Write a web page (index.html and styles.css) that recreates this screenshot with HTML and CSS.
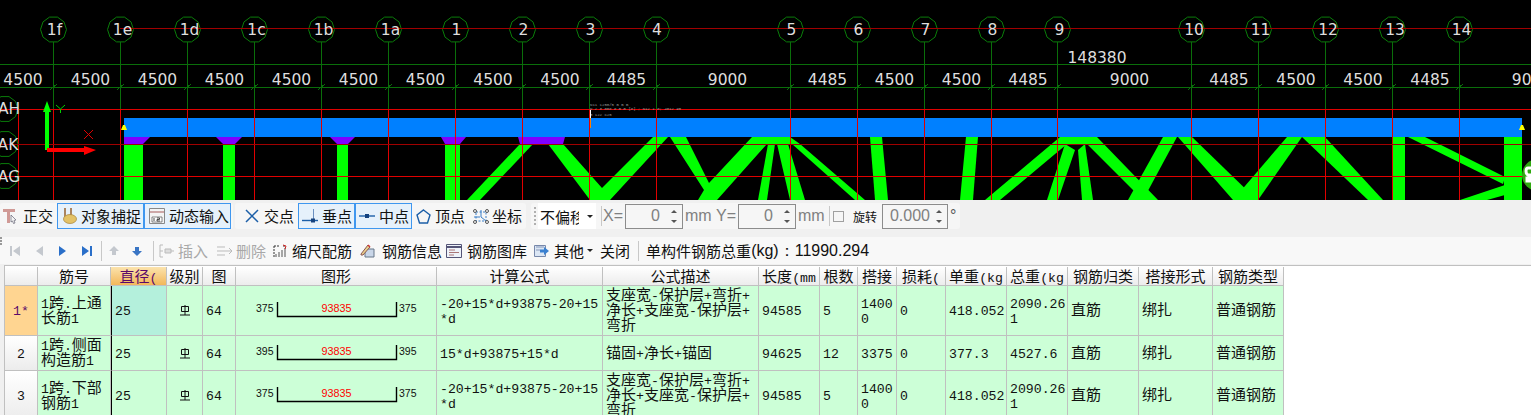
FILE: index.html
```html
<!DOCTYPE html>
<html lang="zh">
<head>
<meta charset="utf-8">
<title>钢筋编辑</title>
<link rel="stylesheet" href="styles.css">
</head>
<body>
<div class="app">
<svg class="cad" width="1531" height="200" viewBox="0 0 1531 200" xmlns="http://www.w3.org/2000/svg">
  <defs>
    <g id="axis">
      <polygon class="bubble" points="13,0 10.5,7.6 4,12.4 -4,12.4 -10.5,7.6 -13,0 -10.5,-7.6 -4,-12.4 4,-12.4 10.5,-7.6" transform="translate(.5 29.5)"/>
      <line class="gl" x1=".5" y1="42" x2=".5" y2="109"/>
      <line class="gl" x1="-3" y1="90" x2="4" y2="84"/>
      <line class="rv" x1=".5" y1="109" x2=".5" y2="200"/>
    </g>
  </defs>
  <rect width="1531" height="200" fill="#000"/>
  <line class="gl" x1="0" y1="64.5" x2="1531" y2="64.5"/>
  <line class="gl" x1="0" y1="87.5" x2="1531" y2="87.5"/>

  <g class="green">
    <rect x="124" y="144" width="19" height="56"/><rect x="223" y="144" width="12" height="56"/>
    <rect x="337" y="144" width="11" height="56"/><rect x="445" y="144" width="15" height="56"/>
    <polygon points="520,144 533,144 480,200 467,200"/>
    <polygon points="548,144 563,144 602,188 653,137 668,137 610,200 590,200"/>
    <polygon points="670,137 686,137 709,183 752,137 790,137 800,144 865,200 855,200 792,144 767,144 717,200 698,200 704,190"/>
    <polygon points="768,144 775,144 767,200 758,200"/>
    <polygon points="777,144 788,144 805,200 790,200"/>
    <polygon points="870,137 882,137 888,200 875,200"/>
    <polygon points="966,137 978,137 973,200 960,200"/>
    <polygon points="985,200 1060,137 1097,137 1158,200 1143,200 1087,144 1067,144 1000,200"/>
    <polygon points="1065,144 1075,150 1058,200 1047,200"/>
    <polygon points="1078,150 1085,144 1093,200 1082,200"/>
    <polygon points="1163,137 1177,137 1143,200 1128,200"/>
    <polygon points="1178,137 1192,137 1257,200 1233,200"/>
    <polygon points="1287,137 1302,137 1258,200 1233,200"/>
    <polygon points="1302,137 1325,137 1383,200 1368,200"/>
    <rect x="1392" y="137" width="13" height="63"/>
    <polygon points="1408,137 1425,137 1505,177 1503,184"/>
    <rect x="1504" y="137" width="18" height="63"/>
    <polygon points="1460,200 1505,185 1505,195 1487,200"/>
  </g>
  <g class="violet">
    <polygon points="124,137 150,137 143,144 124,144"/>
    <polygon points="216,137 242,137 235,144 223,144"/>
    <polygon points="330,137 355,137 348,144 337,144"/>
    <polygon points="441,137 466,137 460,144 445,144"/>
    <polygon points="518,137 565,137 563,144 520,144"/>
  </g>
  <rect x="124" y="118" width="1398" height="19" fill="#0080ff"/>

  <use href="#axis" x="53"/><use href="#axis" x="120"/><use href="#axis" x="187"/><use href="#axis" x="254"/>
  <use href="#axis" x="321"/><use href="#axis" x="388"/><use href="#axis" x="455"/><use href="#axis" x="522"/>
  <use href="#axis" x="589"/><use href="#axis" x="656"/><use href="#axis" x="790"/><use href="#axis" x="857"/>
  <use href="#axis" x="924"/><use href="#axis" x="991"/><use href="#axis" x="1057"/><use href="#axis" x="1191"/>
  <use href="#axis" x="1258"/><use href="#axis" x="1325"/><use href="#axis" x="1392"/><use href="#axis" x="1459"/>
  <line class="rv" x1="18.5" y1="109" x2="18.5" y2="200"/>

  <polygon class="bubble" points="18,109 15.5,116.6 9,121.4 1,121.4 -5,117 -5,101 1,96.6 9,96.6 15.5,101.4"/>
  <polygon class="bubble" points="18,144 15.5,151.6 9,156.4 1,156.4 -5,152 -5,136 1,131.6 9,131.6 15.5,136.4"/>
  <polygon class="bubble" points="18,176 15.5,183.6 9,188.4 1,188.4 -5,184 -5,168 1,163.6 9,163.6 15.5,168.4"/>

  <line class="rh" x1="120" y1="28.5" x2="1531" y2="28.5"/>
  <line class="rb" x1="0" y1="109.5" x2="1531" y2="109.5"/>
  <line class="rh" x1="0" y1="144.5" x2="1531" y2="144.5"/>
  <line class="rb" x1="0" y1="176.5" x2="1531" y2="176.5"/>

  <g class="lbl">
    <text x="54.5" y="35">1f</text><text x="122.5" y="35">1e</text><text x="189.5" y="35">1d</text><text x="256.5" y="35">1c</text>
    <text x="323.5" y="35">1b</text><text x="390.5" y="35">1a</text><text x="456.5" y="35">1</text><text x="523.5" y="35">2</text>
    <text x="590.5" y="35">3</text><text x="657" y="35">4</text><text x="791.5" y="35">5</text><text x="858.5" y="35">6</text>
    <text x="925.5" y="35">7</text><text x="992.5" y="35">8</text><text x="1059.5" y="35">9</text><text x="1194" y="35">10</text>
    <text x="1260.5" y="35">11</text><text x="1328" y="35">12</text><text x="1395" y="35">13</text><text x="1461.5" y="35">14</text>
    <text x="1097" y="63">148380</text>
    <text x="23" y="85">4500</text><text x="90.5" y="85">4500</text><text x="157.5" y="85">4500</text><text x="224.5" y="85">4500</text>
    <text x="291.5" y="85">4500</text><text x="358.5" y="85">4500</text><text x="425.5" y="85">4500</text><text x="493" y="85">4500</text>
    <text x="560" y="85">4500</text><text x="626.5" y="85">4485</text><text x="727.5" y="85">9000</text><text x="827.5" y="85">4485</text>
    <text x="894.5" y="85">4500</text><text x="961.5" y="85">4500</text><text x="1028" y="85">4485</text><text x="1129.5" y="85">9000</text>
    <text x="1229" y="85">4485</text><text x="1296" y="85">4500</text><text x="1363" y="85">4500</text><text x="1430" y="85">4485</text>
    <text x="1531.5" y="85">9000</text>
    <text x="9" y="114">AH</text><text x="8" y="150">AK</text><text x="9" y="182">AG</text>
  </g>

  <polygon points="45,150 45,112 43,112 47,101 51,112 49,112 49,150" fill="#00ff00"/>
  <polygon points="47,148 84,148 84,146 96,150 84,155 84,152 47,152" fill="#ff0000"/>
  <path d="M56 105l4.5 4 4.500-4M60.500 109v4" class="thin" stroke="#00d000"/>
  <path d="M84 130l9 9M93 130l-9 9" class="thin" stroke="#e00000"/>
  <polygon points="121,130 123,125 125,125 127,130" fill="#ffff00"/>
  <polygon points="1519,130 1521,125 1523,125 1525,130" fill="#ffff00"/>

  <g class="tiny">
    <text x="590" y="106">N11 1250/5 B B B</text>
    <text x="590" y="110">N 2 3 008 8 B B [8] ; N12 1 8; 4012 95</text>
    <text x="590" y="116">G 122 C25</text>
  </g>
  <rect x="590" y="110" width="1" height="8" fill="#fff"/>
  <rect x="590" y="118" width="1" height="10" fill="#ff8000"/>
  <circle cx="1538" cy="175" r="16" fill="#2fa80f"/>
  <path d="M1531 168h-3q-2 0-2 3t2 4h3v3h-4v3h4" fill="none" stroke="#fff" stroke-width="3"/>
</svg>

<div class="bar1">
  <div class="grp grp-a">
    <span class="tool t-ortho">
      <svg class="ic" width="15" height="16" viewBox="0 0 15 16"><path d="M0 1h12v3H7v11H4V4H0z" fill="#d09a96"/><path d="M8 7l5 5-2 .5 1 2.500-1.500.5-1-2.500L8 14z" fill="#f4f4f4" stroke="#667" stroke-width=".7"/></svg>正交</span>
    <span class="tool tog tog-87">
      <svg class="ic" width="15" height="18" viewBox="0 0 15 18"><path d="M3 1v9M9 1v9" stroke="#9b6a3a" stroke-width="1.600" fill="none"/><ellipse cx="8" cy="12" rx="6.500" ry="4.500" fill="#e3c267" stroke="#a58238" stroke-width=".7"/></svg>对象捕捉</span>
    <span class="tool tog tog-87">
      <svg class="ic" width="16" height="16" viewBox="0 0 16 16"><path d="M.5.500h15v15H.500z" fill="#f4f4f4" stroke="#888"/><path d="M1 4h14" stroke="#a65a5a"/><path d="M3 9h10v5H3z" fill="#fff" stroke="#555" stroke-width=".7"/><path d="M5 10v3M8 10h2.500v1.500H8V13h3" stroke="#222" stroke-width=".8" fill="none"/></svg>动态输入</span>
    <span class="grip grip-a"></span>
  </div>
  <div class="grp grp-b">
    <span class="tool">
      <svg class="ic" width="14" height="14" viewBox="0 0 14 14"><path d="M1 1l12 12M13 1L1 13" stroke="#1c5fa8" stroke-width="1.500"/></svg>交点</span>
    <span class="tool tog tog-57">
      <svg class="ic" width="16" height="14" viewBox="0 0 16 14"><path d="M0 11.500h16" stroke="#1c5fa8" stroke-width="1.400"/><path d="M11.500 0v10" stroke="#6a8fc0"/><rect x="9" y="9.500" width="4" height="4" fill="#15427e"/></svg>垂点</span>
    <span class="tool tog tog-57">
      <svg class="ic" width="16" height="14" viewBox="0 0 16 14"><path d="M0 7h16" stroke="#1c5fa8" stroke-width="1.400"/><rect x="6" y="5" width="4" height="4" fill="#15427e"/></svg>中点</span>
    <span class="tool t-vertex">
      <svg class="ic" width="15" height="15" viewBox="0 0 15 15"><path d="M7.500 1L14 6l-2.500 8h-8L1 6z" fill="none" stroke="#1c5fa8" stroke-width="1.400"/></svg>顶点</span>
    <span class="tool t-coord">
      <svg class="ic" width="18" height="17" viewBox="0 0 18 17"><path d="M4 4h10v9H4z" fill="none" stroke="#3a7fc8" stroke-dasharray="2 1.500"/><path d="M2 9h6M9 2v7l5 4" fill="none" stroke="#3a7fc8"/><circle cx="3" cy="3" r="1.500" fill="none" stroke="#555"/><circle cx="15" cy="3" r="1.500" fill="none" stroke="#555"/><circle cx="3" cy="14" r="1.500" fill="none" stroke="#555"/><circle cx="15" cy="14" r="1.500" fill="none" stroke="#555"/></svg>坐标</span>
  </div>
  <div class="grp grp-c">
    <span class="grip grip-c"></span>
    <span class="combo"><span class="combo-text">不偏移</span><span class="caret"></span></span>
    <span class="vsep vsep-a"></span>
    <span class="lat dim lab-x">X=</span>
    <span class="spin spin-58"><span class="spin-val lat">0</span><span class="arrows"><i class="up"></i><i class="dn"></i></span></span>
    <span class="lat dim lab-mm">mm</span>
    <span class="lat dim lab-y">Y=</span>
    <span class="spin spin-58"><span class="spin-val lat">0</span><span class="arrows"><i class="up"></i><i class="dn"></i></span></span>
    <span class="lat dim lab-mm">mm</span>
    <span class="vsep vsep-b"></span>
    <span class="check"></span>
    <span class="rot">旋转</span>
    <span class="spin spin-66"><span class="spin-val lat">0.000</span><span class="arrows"><i class="up"></i><i class="dn"></i></span></span>
    <span class="lat deg">°</span>
  </div>
</div>

<div class="bar2">
  <span class="grip2"></span>
  <span class="nav">
    <svg width="16" height="16" viewBox="0 0 16 16"><path d="M3 3h2v10H3zM13 3v10L6 8z" fill="#c4c8ce"/></svg>
    <svg width="16" height="16" viewBox="0 0 16 16"><path d="M12 3v10L5 8z" fill="#c4c8ce"/></svg>
    <svg width="16" height="16" viewBox="0 0 16 16"><path d="M4 3v10l7-5z" fill="#2a6fc9"/></svg>
    <svg width="16" height="16" viewBox="0 0 16 16"><path d="M3 3v10l7-5zM11 3h2v10h-2z" fill="#2a6fc9"/></svg>
  </span>
  <span class="vsep vsep-n1"></span>
  <span class="nav nav-s">
    <svg width="16" height="16" viewBox="0 0 16 16"><path d="M8 3l5 5h-3v4H6V8H3z" fill="#c4c8ce"/></svg>
    <svg width="16" height="16" viewBox="0 0 16 16"><path d="M8 13l5-5h-3V4H6v4H3z" fill="#3a75c4"/></svg>
  </span>
  <span class="vsep vsep-n2"></span>
  <span class="tool off s-ins"><svg width="15" height="14" viewBox="0 0 15 14"><path d="M4 1H1v12h3M1 7h3" fill="none" stroke="#bbb"/><path d="M6 5h6v4H6zM12 7h3" fill="#ddd" stroke="#bbb"/></svg>插入</span>
  <span class="tool off s-del"><svg width="15" height="14" viewBox="0 0 15 14"><path d="M0 3h8M0 7h8M0 11h8" stroke="#bbb"/><path d="M8 7h7M12 4l3 3-3 3" fill="none" stroke="#bbb"/></svg>删除</span>
  <span class="tool s-scale"><svg width="14" height="14" viewBox="0 0 14 14"><path d="M1 2h5M1 2v11M10 2h3" fill="none" stroke="#333" stroke-dasharray="2 1"/><path d="M3 13v-3M6 13V8M9 13V6M12 13V4" stroke="#555"/><path d="M10 1l3 1-1 3" fill="none" stroke="#c22"/></svg>缩尺配筋</span>
  <span class="tool s-info"><svg width="15" height="15" viewBox="0 0 15 15"><path d="M5 6h9v8H5z" fill="#c9d6e8" stroke="#678"/><path d="M1 11l7-9 2 2-7 8H1z" fill="#e8cf8a" stroke="#855"/><path d="M8 2l2 2" stroke="#c33" stroke-width="1.500"/></svg>钢筋信息</span>
  <span class="tool s-lib"><svg width="16" height="14" viewBox="0 0 16 14"><path d="M.5.500h15v13H.500z" fill="#eef3fa" stroke="#557"/><path d="M1 3h14" stroke="#557" stroke-width="2"/><path d="M3 6h6M3 8.500h10M3 11h5" stroke="#a77"/></svg>钢筋图库</span>
  <span class="tool s-more"><svg width="15" height="14" viewBox="0 0 15 14"><path d="M.5 1.500h11v11H.500z" fill="#dbe6f4" stroke="#78a"/><path d="M2 3h8M2 6h4" stroke="#89b"/><path d="M6 5.500h4V3l5 4-5 4V8.500H6z" fill="#3a80d0"/></svg>其他</span>
  <span class="caret caret-tb"></span>
  <span class="tool close">关闭</span>
  <span class="vsep vsep-n3"></span>
  <span class="tool total">单构件钢筋总重<span class="lat">(kg)：11990.294</span></span>
</div>

<div class="sheet">
<table class="rebar">
  <colgroup>
    <col class="c0"><col class="c1"><col class="c2"><col class="c3"><col class="c4"><col class="c5"><col class="c6"><col class="c7"><col class="c8"><col class="c9"><col class="c10"><col class="c11"><col class="c12"><col class="c13"><col class="c14"><col class="c15"><col class="c16">
  </colgroup>
  <thead>
    <tr>
      <th></th><th>筋号</th><th class="cur">直径<b>(</b></th><th>级别</th><th>图</th><th>图形</th><th>计算公式</th><th>公式描述</th>
      <th>长度<b>(mm</b></th><th>根数</th><th>搭接</th><th>损耗<b>(</b></th><th>单重<b>(kg</b></th><th>总重<b>(kg</b></th><th>钢筋归类</th><th>搭接形式</th><th>钢筋类型</th>
    </tr>
  </thead>
  <tbody>
    <tr class="r-tall">
      <th class="rh-cur"><b>1*</b></th>
      <td><b>1</b>跨<b>.</b>上通<br>长筋<b>1</b></td>
      <td class="dia sel"><b>25</b></td>
      <td class="mid"><svg class="grade" width="10" height="11" viewBox="0 0 10 11"><path d="M1.500 1.500h7v5h-7zM5 0v10M0 10h10" fill="none" stroke="#111"/></svg></td>
      <td><b>64</b></td>
      <td class="fig"><svg width="200" height="49" viewBox="0 0 200 49"><g transform="translate(0 16)"><text class="dim-t" x="20" y="10">375</text><path class="bar-l" d="M41.500 0v14.500h119V0"/><text class="dim-r" x="100.500" y="10">93835</text><text class="dim-t" x="163" y="10">375</text></g></svg></td>
      <td><b>-20+15*d+93875-20+15</b><br><b>*d</b></td>
      <td>支座宽<b>-</b>保护层<b>+</b>弯折<b>+</b><br>净长<b>+</b>支座宽<b>-</b>保护层<b>+</b><br>弯折</td>
      <td><b>94585</b></td><td><b>5</b></td><td><b>1400</b><br><b>0</b></td><td><b>0</b></td><td><b>418.052</b></td><td><b>2090.26</b><br><b>1</b></td>
      <td>直筋</td><td>绑扎</td><td>普通钢筋</td>
    </tr>
    <tr class="r-short">
      <th><b>2</b></th>
      <td><b>1</b>跨<b>.</b>侧面<br>构造筋<b>1</b></td>
      <td class="dia"><b>25</b></td>
      <td class="mid"><svg class="grade" width="10" height="11" viewBox="0 0 10 11"><path d="M1.500 1.500h7v5h-7zM5 0v10M0 10h10" fill="none" stroke="#111"/></svg></td>
      <td><b>64</b></td>
      <td class="fig"><svg width="200" height="34" viewBox="0 0 200 34"><g transform="translate(0 9)"><text class="dim-t" x="20" y="10">395</text><path class="bar-l" d="M41.500 0v14.500h119V0"/><text class="dim-r" x="100.500" y="10">93835</text><text class="dim-t" x="163" y="10">395</text></g></svg></td>
      <td><b>15*d+93875+15*d</b></td>
      <td>锚固<b>+</b>净长<b>+</b>锚固</td>
      <td><b>94625</b></td><td><b>12</b></td><td><b>3375</b></td><td><b>0</b></td><td><b>377.3</b></td><td><b>4527.6</b></td>
      <td>直筋</td><td>绑扎</td><td>普通钢筋</td>
    </tr>
    <tr class="r-tall">
      <th><b>3</b></th>
      <td><b>1</b>跨<b>.</b>下部<br>钢筋<b>1</b></td>
      <td class="dia"><b>25</b></td>
      <td class="mid"><svg class="grade" width="10" height="11" viewBox="0 0 10 11"><path d="M1.500 1.500h7v5h-7zM5 0v10M0 10h10" fill="none" stroke="#111"/></svg></td>
      <td><b>64</b></td>
      <td class="fig"><svg width="200" height="49" viewBox="0 0 200 49"><g transform="translate(0 16)"><text class="dim-t" x="20" y="10">375</text><path class="bar-l" d="M41.500 0v14.500h119V0"/><text class="dim-r" x="100.500" y="10">93835</text><text class="dim-t" x="163" y="10">375</text></g></svg></td>
      <td><b>-20+15*d+93875-20+15</b><br><b>*d</b></td>
      <td>支座宽<b>-</b>保护层<b>+</b>弯折<b>+</b><br>净长<b>+</b>支座宽<b>-</b>保护层<b>+</b><br>弯折</td>
      <td><b>94585</b></td><td><b>5</b></td><td><b>1400</b><br><b>0</b></td><td><b>0</b></td><td><b>418.052</b></td><td><b>2090.26</b><br><b>1</b></td>
      <td>直筋</td><td>绑扎</td><td>普通钢筋</td>
    </tr>
  </tbody>
</table>
</div>
</div>
</body>
</html>
```
FILE: styles.css
```css
html, body { margin: 0; padding: 0; }
body {
  width: 1531px; height: 415px; overflow: hidden; background: #f0f0f0;
  font-family: "Noto Sans CJK SC", "Liberation Sans", sans-serif; font-size: 15px; color: #111;
}
.app { display: flex; flex-direction: column; width: 1531px; height: 415px; overflow: hidden; }

/* CAD canvas */
.cad { display: block; flex: none; }
.cad line, .cad polygon.bubble { shape-rendering: crispEdges; }
.bubble { fill: none; stroke: #0a7d0a; stroke-width: 1; shape-rendering: auto !important; }
.gl { stroke: #0a6e0a; stroke-width: 1; }
.rv { stroke: #e00000; stroke-width: 1; }
.rb { stroke: #e00000; stroke-width: 1; }
.rh { stroke: #a00000; stroke-width: 1; }
.green { fill: #00ff00; }
.violet { fill: #8000ff; }
.lbl text { font-family: "DejaVu Sans", sans-serif; font-size: 15.500px; fill: #dedede; text-anchor: middle; }
.thin { fill: none; stroke-width: 1; }
.tiny text { font-family: "Liberation Mono", monospace; font-size: 4px; fill: #999; }

/* toolbar 1 */
.bar1 { flex: none; height: 31px; display: flex; align-items: stretch; padding-top: 3px; box-sizing: border-box; }
.grp { display: flex; align-items: center; background: #f6f6f6; border-radius: 3px; height: 26px; }
.grp-a { width: 233px; padding-left: 3px; box-sizing: border-box; }
.grp-b { width: 291px; margin-left: 2px; padding-left: 10px; box-sizing: border-box; }
.grp-c { width: 429px; margin-left: 5px; padding-left: 3px; box-sizing: border-box; }
.tool { display: inline-flex; align-items: center; gap: 5px; white-space: nowrap; line-height: 20px; flex: none; }
.ic { flex: none; }
.t-ortho { margin-right: 4px; }
.tog { box-sizing: border-box; height: 26px; border: 1px solid #3f97ef; background: #e6f1fb; padding-left: 3px; gap: 4px; }
.tog-87 { width: 87px; padding-left: 4px; }
.tog-57 { width: 57px; margin-left: 0; }
.grp-b .tool + .tog { margin-left: 4px; }
.grp-b .tog + .tog { margin-left: 0; }
.t-vertex { margin-left: 4px; gap: 4px; }
.t-coord { margin-left: 7px; gap: 2px; }
.grip { width: 0; height: 18px; border-left: 2px dotted #b0b0b0; flex: none; }
.grip-a { margin-left: 6px; }
.grip-c { margin-right: 2px; }
.combo { width: 58px; height: 26px; background: #fff; display: flex; align-items: center; flex: none; position: relative; }
.combo-text { width: 39px; margin-left: 2px; overflow: hidden; white-space: nowrap; }
.caret { display: inline-block; width: 0; height: 0; border: 3px solid transparent; border-top: 3px solid #222; border-bottom: 0; flex: none; margin-left: 8px; }
.vsep { width: 1px; height: 20px; background: #c8c8c8; flex: none; }
.vsep-a { margin-left: 5px; }
.vsep-b { margin-left: 4px; }
.lat { font-family: "Liberation Sans", sans-serif; font-size: 16px; }
.dim { color: #808080; }
.lab-x { margin-left: 1px; width: 22px; }
.lab-mm { margin-left: 2px; width: 27px; }
.lab-y { margin-left: 4px; width: 22px; }
.spin { box-sizing: border-box; height: 25px; border: 1px solid #8c8c8c; display: flex; align-items: center; justify-content: flex-end; flex: none; color: #808080; }
.spin-58 { width: 58px; }
.spin-58 .spin-val { padding-right: 7px; }
.spin-66 { width: 66px; margin-left: 5px; }
.spin-66 .spin-val { padding-right: 2px; }
.arrows { display: flex; flex-direction: column; gap: 7px; width: 14px; align-items: center; flex: none; margin-right: 1px; }
.arrows i { display: block; width: 0; height: 0; border-left: 3px solid transparent; border-right: 3px solid transparent; }
.arrows .up { border-bottom: 3px solid #555; }
.arrows .dn { border-top: 3px solid #555; }
.check { box-sizing: border-box; width: 11px; height: 11px; border: 1px solid #a0a0a0; background: #f6f6f6; margin-left: 3px; flex: none; }
.rot { font-size: 12px; margin-left: 9px; width: 24px; flex: none; white-space: nowrap; }
.deg { color: #555; margin-left: 2px; }

/* toolbar 2 */
.bar2 { flex: none; height: 27px; margin-top: 6px; background: #f8f8f8; display: flex; align-items: center; }
.grip2 { width: 0; height: 8px; border-left: 2px dotted #999; margin-right: 5px; align-self: flex-start; flex: none; }
.nav { display: flex; gap: 8px; flex: none; }
.nav svg, .tool svg { flex: none; }
.vsep-n1 { margin-left: 6px; }
.nav-s { margin-left: 4px; gap: 7px; }
.vsep-n2 { margin-left: 8px; }
.off { color: #a8a8a8; gap: 4px; }
.s-ins { margin-left: 5px; }
.s-del { margin-left: 9px; }
.s-scale { margin-left: 7px; }
.s-info { margin-left: 8px; gap: 7px; }
.s-lib { margin-left: 4px; }
.s-more { margin-left: 7px; }
.caret-tb { margin-left: 3px; }
.close { margin-left: 7px; }
.vsep-n3 { margin-left: 8px; }
.total { margin-left: 7px; gap: 0; }

/* table */
.sheet { flex: none; margin-top: 1px; height: 150px; background: #fff; border-top: 1px solid #c0c0c0; border-left: 1px solid #c0c0c0; margin-left: 4px; padding-top: 1px; box-sizing: border-box; overflow: hidden; }
.rebar { table-layout: fixed; width: 1279px; border-collapse: separate; border-spacing: 0; line-height: 15px; }
.rebar b { font-family: "Liberation Mono", monospace; font-weight: 400; font-size: 13.200px; line-height: 0; }
.c0 { width: 33px; } .c1 { width: 73px; } .c2 { width: 56px; } .c3 { width: 36px; } .c4 { width: 33px; }
.c5 { width: 201px; } .c6 { width: 166px; } .c7 { width: 156px; } .c8 { width: 61px; } .c9 { width: 38px; }
.c10 { width: 39px; } .c11 { width: 49px; } .c12 { width: 61px; } .c13 { width: 61px; } .c14 { width: 71px; }
.c15 { width: 74px; } .c16 { width: 71px; }
.rebar th, .rebar td { border-right: 1px solid #c0c0c0; border-bottom: 1px solid #c0c0c0; padding: 0 0 4px; overflow: hidden; white-space: nowrap; font-weight: 400; }
.rebar thead th { padding-bottom: 2px; }
.rebar thead tr { height: 19px; }
.rebar thead th { background: linear-gradient(#ffffff, #ececec); text-align: center; }
.rebar thead th.cur { background: linear-gradient(#fbe3ad, #f2b75a); color: #5a0a6a; }
.rebar tbody th { background: linear-gradient(#ffffff, #ececec); text-align: center; }
.rebar tbody th.rh-cur { background: #ffd591; color: #5a0a6a; }
.rebar td { background: #ccffd7; padding-left: 3px; color: #111; }
.rebar .r-tall { height: 50px; }
.rebar .r-short { height: 35px; }
.rebar td.dia { border-left: 1px solid #000; padding-left: 3px; }
.rebar td.sel { background: #b4f0dc; }
.rebar td.mid { text-align: center; padding-left: 0; }
.rebar td.fig { padding: 0; }
.fig svg { display: block; }
.grade { display: inline-block; vertical-align: middle; }
.dim-t { font-family: "Liberation Sans", sans-serif; font-size: 10.500px; fill: #111; }
.dim-r { font-family: "Liberation Sans", sans-serif; font-size: 10.800px; fill: #f00; text-anchor: middle; }
.bar-l { fill: none; stroke: #000; stroke-width: 1.400; }
```
